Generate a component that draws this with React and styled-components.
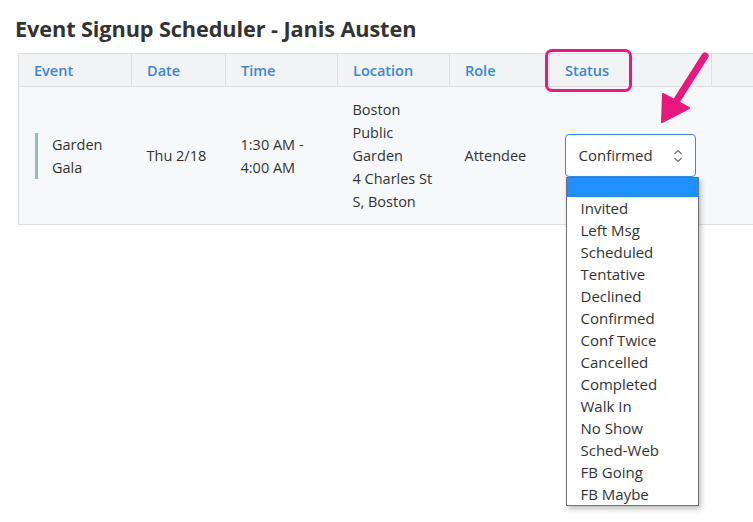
import React from "react";
import styled, { createGlobalStyle } from "styled-components";

const GlobalStyle = createGlobalStyle`
  html, body {
    margin: 0;
    padding: 0;
    background: #ffffff;
    overflow: hidden;
  }
  body {
    font-family: "Open Sans", "Noto Sans", sans-serif;
    color: #333;
  }
`;

const statuses = [
  "",
  "Invited",
  "Left Msg",
  "Scheduled",
  "Tentative",
  "Declined",
  "Confirmed",
  "Conf Twice",
  "Cancelled",
  "Completed",
  "Walk In",
  "No Show",
  "Sched-Web",
  "FB Going",
  "FB Maybe",
];

const columns = [
  { label: "Event", width: 113 },
  { label: "Date", width: 94 },
  { label: "Time", width: 112 },
  { label: "Location", width: 112 },
  { label: "Role", width: 100 },
  { label: "Status", width: 162, marked: true },
  { label: "", width: 42 },
];

const App = () => {
  return (
    <>
      <GlobalStyle />
      <Page>
        <Title>Event Signup Scheduler - Janis Austen</Title>
        <Table>
          <colgroup>
            {columns.map((c, i) => (
              <col key={i} style={{ width: c.width }} />
            ))}
          </colgroup>
          <thead>
            <tr>
              {columns.map((c, i) => (
                <Th key={i} $last={i === columns.length - 1}>
                  {c.label}
                  {c.marked && <Highlight />}
                </Th>
              ))}
            </tr>
          </thead>
          <tbody>
            <tr>
              <Td>
                <EventName>Garden Gala</EventName>
              </Td>
              <Td>Thu 2/18</Td>
              <Td>1:30 AM - 4:00 AM</Td>
              <Td>
                Boston Public Garden
                <br />4 Charles St S, Boston
              </Td>
              <Td>Attendee</Td>
              <Td>
                <SelectWrap>
                  <SelectBox>
                    <span>Confirmed</span>
                    <svg width="10" height="16" viewBox="0 0 10 16">
                      <path d="M1.5 6 L5 2.5 L8.5 6 M1.5 10 L5 13.5 L8.5 10" fill="none" stroke="#666" strokeWidth="1.1" />
                    </svg>
                  </SelectBox>
                  <Options>
                    {statuses.map((s, i) => (
                      <Option key={i} $active={i === 0} $blank={s === ""}>
                        {s}
                      </Option>
                    ))}
                  </Options>
                </SelectWrap>
              </Td>
              <Td />
            </tr>
          </tbody>
        </Table>
        <Pointer width="60" height="80" viewBox="0 0 60 80">
          <line x1="48" y1="4" x2="20" y2="48" stroke="#e8187e" strokeWidth="7" strokeLinecap="round" />
          <polygon points="5,70 6,42 32,56" fill="#e8187e" stroke="#e8187e" strokeWidth="2" strokeLinejoin="round" />
        </Pointer>
      </Page>
    </>
  );
};

const Page = styled.div`
  position: relative;
  width: 753px;
  height: 522px;
  padding-top: 16px;
  box-sizing: border-box;
`;

const Title = styled.h1`
  margin: 0 0 11px 15px;
  font-size: 21.7px;
  line-height: 26px;
  font-weight: 700;
  color: #333;
  letter-spacing: -0.1px;
`;

const Table = styled.table`
  margin-left: 18px;
  width: 735px;
  table-layout: fixed;
  border-collapse: collapse;
  border-left: 1px solid #dcdfe3;
  font-size: 14.5px;
`;

const Th = styled.th`
  position: relative;
  height: 32px;
  padding: 0 15px;
  text-align: left;
  font-weight: 600;
  color: #3a87d6;
  background: #f1f3f5;
  border-top: 1px solid #dcdfe3;
  border-bottom: 1px solid #dcdfe3;
  border-right: ${(p) => (p.$last ? "none" : "1px solid #dcdfe3")};
`;

const Highlight = styled.span`
  position: absolute;
  left: -5px;
  top: -5px;
  width: 87px;
  height: 43px;
  box-sizing: border-box;
  border: 3px solid #e8187e;
  border-radius: 7px;
`;

const Td = styled.td`
  height: 137px;
  padding: 0 15px;
  vertical-align: middle;
  line-height: 23px;
  color: #333;
  background: #f6f8fa;
  border-bottom: 1px solid #dcdfe3;
`;

const EventName = styled.div`
  border-left: 3px solid #8fbfc1;
  padding-left: 14px;
  margin-left: 1px;
`;

const SelectWrap = styled.div`
  position: relative;
  width: 131px;
`;

const SelectBox = styled.div`
  height: 43px;
  box-sizing: border-box;
  display: flex;
  align-items: center;
  justify-content: space-between;
  padding: 0 12px 0 13px;
  background: #fff;
  border: 1px solid #3d8bd8;
  border-radius: 4px;
  font-size: 15px;
  color: #333;
`;

const Options = styled.ul`
  position: absolute;
  top: 43px;
  left: 1px;
  width: 131px;
  margin: 0;
  padding: 0;
  list-style: none;
  background: #fff;
  border: 1px solid #707070;
  box-shadow: 2px 3px 5px rgba(0, 0, 0, 0.25);
  z-index: 5;
`;

const Option = styled.li`
  height: ${(p) => (p.$blank ? "19px" : "22px")};
  line-height: 22px;
  padding-left: 14px;
  font-size: 15px;
  color: #333;
  background: ${(p) => (p.$active ? "#1e90ff" : "#fff")};
`;

const Pointer = styled.svg`
  position: absolute;
  left: 657px;
  top: 52px;
`;

export default App;
